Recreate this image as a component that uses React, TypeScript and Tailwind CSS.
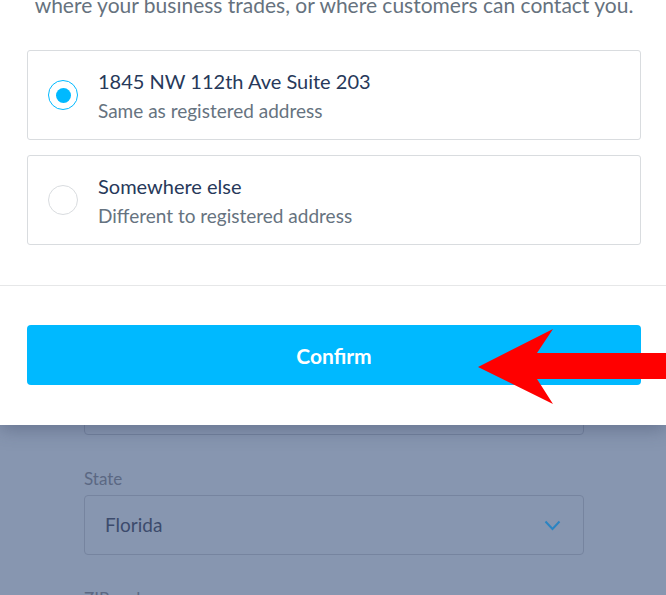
import { useState } from 'react';

const options = [
    { id: 'same', title: '1845 NW 112th Ave Suite 203', sub: 'Same as registered address' },
    { id: 'else', title: 'Somewhere else', sub: 'Different to registered address' },
];

function Radio({ checked }: { checked: boolean }) {
    return (
        <span
            className={`flex h-[30px] w-[30px] shrink-0 items-center justify-center rounded-full border bg-white ${
                checked ? 'border-[#00b9ff]' : 'border-[#d9dcdf]'
            }`}
        >
            {checked && <span className="h-[15px] w-[15px] rounded-full bg-[#00b9ff]" />}
        </span>
    );
}

export default function App() {
    const [selected, setSelected] = useState('same');

    return (
        <div className="relative h-[595px] w-[666px] overflow-hidden bg-[#8796b0] font-['Lato','Open_Sans',sans-serif]">
            {/* page behind the overlay */}
            <div className="ml-[84px] w-[500px] pt-[375px]">
                <div className="h-[60px] rounded-[4px] border border-[#74829e]" />
                <div className="mt-[34px] text-[17px] leading-[20px] text-[#5b6883]">State</div>
                <div className="mt-[6px] flex h-[60px] items-center justify-between rounded-[4px] border border-[#76849f] pl-[20px] pr-[22px]">
                    <span className="text-[19px] text-[#3c4b6c]">Florida</span>
                    <svg width="17" height="11" viewBox="0 0 17 11" fill="none">
                        <path d="M1.5 1.5 L8.5 9 L15.5 1.5" stroke="#2b84c2" strokeWidth="2" />
                    </svg>
                </div>
                <div className="mt-[34px] text-[17px] leading-[20px] text-[#5b6883]">ZIP code</div>
            </div>

            {/* modal */}
            <div className="absolute left-0 right-0 top-0 h-[425px] bg-white shadow-[0_4px_18px_rgba(40,50,80,0.35)]">
                <div className="pl-[27px] pr-[25px]">
                    <p className="-mt-[9px] text-center text-[21px] leading-[28px] text-[#66727e]">
                        where your business trades, or where customers can contact you.
                    </p>
                    <div className="mt-[31px] flex flex-col gap-[15px]">
                        {options.map((o) => (
                            <button
                                key={o.id}
                                onClick={() => setSelected(o.id)}
                                className="flex h-[90px] items-center gap-[20px] rounded-[3px] border border-[#d9dcdf] pl-[20px] text-left"
                            >
                                <Radio checked={selected === o.id} />
                                <span className="flex flex-col pt-[3px]">
                                    <span className="text-[20px] leading-[28px] text-[#27395a]">{o.title}</span>
                                    <span className="mt-[1px] text-[19px] leading-[30px] text-[#667380]">{o.sub}</span>
                                </span>
                            </button>
                        ))}
                    </div>
                </div>
                <div className="mt-[40px] border-t border-[#e6e7e8]" />
                <div className="pl-[27px] pr-[25px] pt-[39px]">
                    <button className="flex h-[60px] w-full items-center justify-center rounded-[4px] bg-[#00b9ff] pt-[1px] text-[21px] font-bold text-white">
                        Confirm
                    </button>
                </div>
            </div>

            {/* annotation arrow */}
            <svg className="absolute left-[478px] top-[329px]" width="188" height="75" viewBox="0 0 188 75">
                <polygon points="0,38 75,0 59,24 188,24 188,50 59,50 75,75" fill="#ff0000" />
            </svg>
        </div>
    );
}
